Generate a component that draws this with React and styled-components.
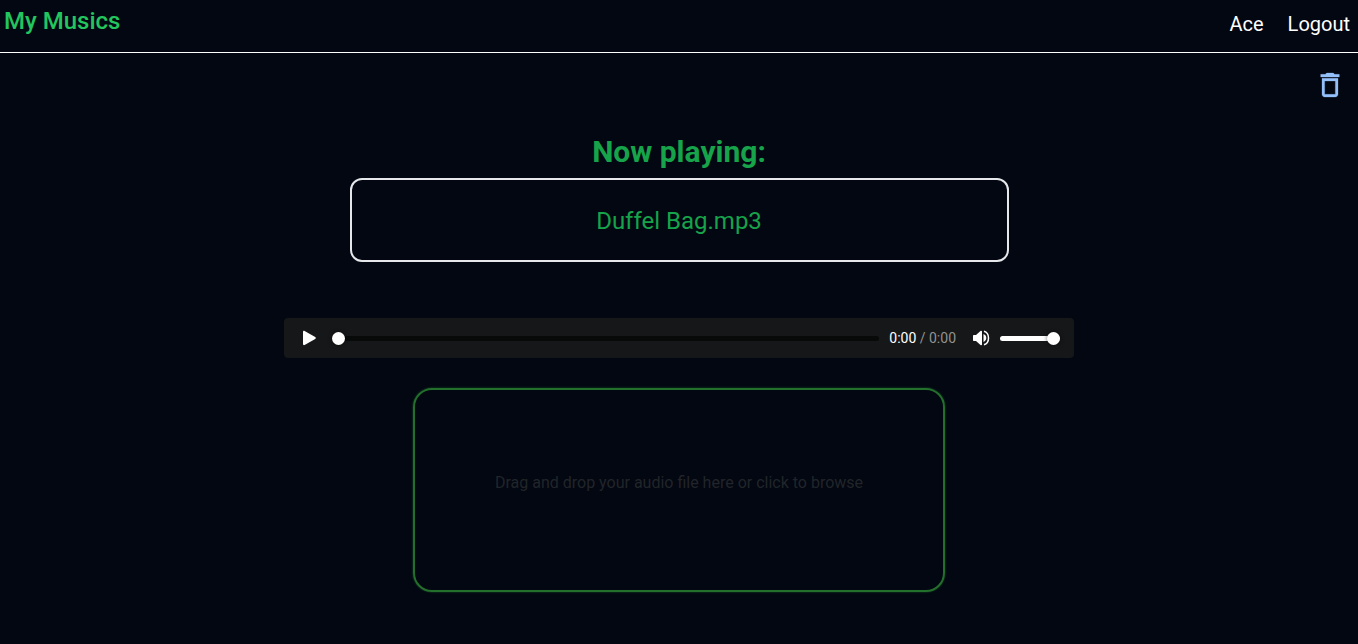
import React, { useState } from "react";
import styled, { createGlobalStyle } from "styled-components";

const GlobalStyle = createGlobalStyle`
  *, *::before, *::after { box-sizing: border-box; }
  body {
    margin: 0;
    min-height: 100vh;
    background: #030712;
    color: #fff;
    font-family: Roboto, "Liberation Sans", sans-serif;
    font-size: 16px;
    line-height: 24px;
  }
`;

const Header = styled.header`
  display: flex;
  justify-content: space-between;
  align-items: flex-start;
  padding: 5px 8px 14px 4px;
  border-bottom: 1px solid #fff;
`;

const Brand = styled.a`
  color: #22c55e;
  font-size: 24px;
  font-weight: 500;
  line-height: 32px;
  text-decoration: none;
`;

const Nav = styled.nav`
  display: flex;
  gap: 24px;
  padding-top: 5px;
`;

const NavLink = styled.a`
  color: #fff;
  font-size: 20px;
  line-height: 28px;
  text-decoration: none;
`;

const Toolbar = styled.div`
  display: flex;
  justify-content: flex-end;
  padding: 16px 12px 0;
`;

const IconButton = styled.button`
  display: flex;
  padding: 0;
  border: 0;
  background: none;
  color: ${(p) => p.$color || "#fff"};
  cursor: pointer;
`;

const Main = styled.main`
  display: flex;
  flex-direction: column;
  align-items: center;
  padding: 33px 16px 24px;
`;

const Title = styled.h1`
  margin: 0 0 8px;
  color: #16a34a;
  font-size: 30px;
  font-weight: 700;
  line-height: 36px;
`;

const Track = styled.div`
  width: 100%;
  max-width: 659px;
  padding: 25px 24px 23px;
  border: 2px solid #e5e7eb;
  border-radius: 12px;
  color: #16a34a;
  font-size: 24px;
  line-height: 32px;
  text-align: center;
`;

const Player = styled.section`
  display: flex;
  align-items: center;
  width: 100%;
  max-width: 790px;
  height: 40px;
  margin: 56px 0 30px;
  padding: 0 14px 0 18px;
  border-radius: 4px;
  background: #161718;
`;

const Slider = styled.input`
  appearance: none;
  height: 13px;
  min-width: 0;
  margin: 0;
  border-radius: 3px;
  background: transparent;
  cursor: pointer;
  ${(p) => (p.$width ? `width: ${p.$width};` : "flex: 1;")}

  &::-webkit-slider-runnable-track {
    height: 5px;
    border-radius: 3px;
    background: ${(p) => p.$track};
  }
  &::-webkit-slider-thumb {
    appearance: none;
    width: 13px;
    height: 13px;
    margin-top: -4px;
    border-radius: 50%;
    background: #fff;
    box-shadow: 0 0 4px rgba(0, 0, 0, 0.6);
  }
`;

const Time = styled.span`
  margin: 0 16px 0 10px;
  font-size: 14px;
  line-height: 20px;
  white-space: nowrap;
`;

const Duration = styled.span`
  color: #929292;
`;

const PlayButton = styled(IconButton)`
  margin-right: 16px;
`;

const MuteButton = styled(IconButton)`
  margin-right: 10px;
`;

const DropZone = styled.label`
  display: flex;
  align-items: center;
  justify-content: center;
  width: 100%;
  max-width: 532px;
  min-height: 204px;
  padding: 0 16px 14px;
  border: 2px solid #23702c;
  border-radius: 19px;
  box-shadow: 0 0 2px #1c5c28;
  color: #212529;
  text-align: center;
  cursor: pointer;
`;

const FileInput = styled.input`
  position: absolute;
  width: 1px;
  height: 1px;
  opacity: 0;
`;

const TrashIcon = () => (
  <svg width="32" height="32" viewBox="0 0 24 24" fill="currentColor" aria-hidden="true">
    <path
      stroke="currentColor"
      strokeWidth="0.2"
      d="M19 4h-3.500l-1-1h-5l-1 1H5v2h14V4zM6 19c0 1.100.9 2 2 2h8c1.100 0 2-.9 2-2V7H6v12zM8 9h8v10H8V9z"
    />
  </svg>
);

const PlayIcon = () => (
  <svg width="14" height="16" viewBox="0 0 14 16" fill="currentColor" aria-hidden="true">
    <path d="M1 2C1 1 1.800.600 2.600 1L13.200 7.100c.8.5.8 1.300 0 1.800L2.600 15C1.800 15.400 1 15 1 14Z" />
  </svg>
);

const VolumeIcon = () => (
  <svg width="18" height="16" viewBox="0 0 18 16" fill="none" aria-hidden="true">
    <path fill="currentColor" d="M2 5h2l4.500-4c.7-.5 1.500-.1 1.500.5v13c0 .6-.8 1-1.500.5L4 11H2c-.6 0-1-.4-1-1V6c0-.6.4-1 1-1Z" />
    <path fill="currentColor" d="M11.500 4c1.800.7 2.800 2.300 2.800 4s-1 3.300-2.800 4Z" />
    <path stroke="currentColor" strokeWidth="1.500" d="M12 1.200c3 .9 4.500 3.700 4.500 6.800s-1.500 5.900-4.500 6.800" />
  </svg>
);

export default function App() {
  const [position, setPosition] = useState(0);
  const [volume, setVolume] = useState(100);

  return (
    <>
      <GlobalStyle />
      <Header>
        <Brand href="#">My Musics</Brand>
        <Nav>
          <NavLink href="#">Ace</NavLink>
          <NavLink href="#">Logout</NavLink>
        </Nav>
      </Header>
      <Toolbar>
        <IconButton type="button" aria-label="Delete" $color="#93c0f8">
          <TrashIcon />
        </IconButton>
      </Toolbar>
      <Main>
        <Title>Now playing:</Title>
        <Track>Duffel Bag.mp3</Track>
        <Player aria-label="Audio player">
          <PlayButton type="button" aria-label="Play">
            <PlayIcon />
          </PlayButton>
          <Slider
            type="range"
            aria-label="Position"
            $track="#080909"
            value={position}
            onChange={(e) => setPosition(Number(e.target.value))}
          />
          <Time>
            0:00 <Duration>/ 0:00</Duration>
          </Time>
          <MuteButton type="button" aria-label="Mute">
            <VolumeIcon />
          </MuteButton>
          <Slider
            type="range"
            aria-label="Volume"
            $track="#fff"
            $width="60px"
            value={volume}
            onChange={(e) => setVolume(Number(e.target.value))}
          />
        </Player>
        <DropZone>
          Drag and drop your audio file here or click to browse
          <FileInput type="file" accept="audio/*" />
        </DropZone>
      </Main>
    </>
  );
}
